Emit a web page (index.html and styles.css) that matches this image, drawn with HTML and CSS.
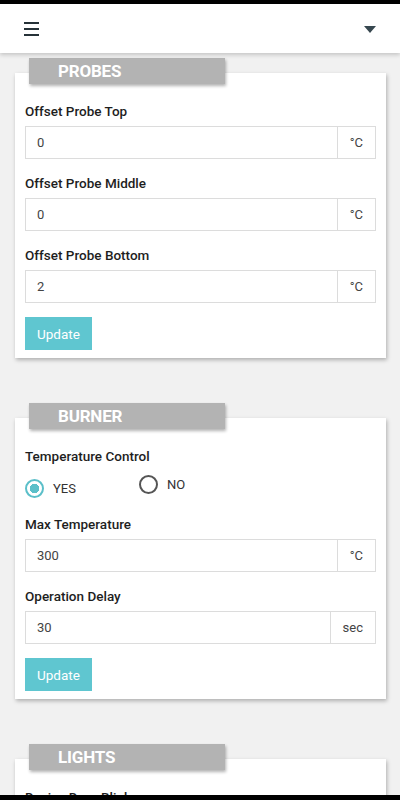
FILE: index.html
```html
<!DOCTYPE html>
<html lang="en">

<head>
    <meta charset="UTF-8">
    <meta name="viewport" content="width=device-width, initial-scale=1.0">
    <title>Settings</title>
    <link rel="stylesheet" href="styles.css">
</head>

<body>
    <div class="statusbar"></div>

    <header class="topbar">
        <span class="menu">
            <i></i><i></i><i></i>
        </span>
        <span class="caret"></span>
    </header>

    <main class="page">
        <section class="section">
            <div class="tab">PROBES</div>
            <div class="card">
                <div class="field">
                    <label>Offset Probe Top</label>
                    <div class="input">
                        <span class="value">0</span>
                        <span class="unit">°C</span>
                    </div>
                </div>
                <div class="field">
                    <label>Offset Probe Middle</label>
                    <div class="input">
                        <span class="value">0</span>
                        <span class="unit">°C</span>
                    </div>
                </div>
                <div class="field">
                    <label>Offset Probe Bottom</label>
                    <div class="input">
                        <span class="value">2</span>
                        <span class="unit">°C</span>
                    </div>
                </div>
                <button class="btn">Update</button>
            </div>
        </section>

        <section class="section">
            <div class="tab">BURNER</div>
            <div class="card">
                <div class="field">
                    <label>Temperature Control</label>
                    <div class="radios">
                        <span class="opt opt-yes"><i class="dot on"></i>YES</span>
                        <span class="opt"><i class="dot"></i>NO</span>
                    </div>
                </div>
                <div class="field">
                    <label>Max Temperature</label>
                    <div class="input">
                        <span class="value">300</span>
                        <span class="unit">°C</span>
                    </div>
                </div>
                <div class="field">
                    <label>Operation Delay</label>
                    <div class="input">
                        <span class="value">30</span>
                        <span class="unit">sec</span>
                    </div>
                </div>
                <button class="btn">Update</button>
            </div>
        </section>

        <section class="section">
            <div class="tab">LIGHTS</div>
            <div class="card">
                <div class="field">
                    <label>Device Door Blink</label>
                </div>
            </div>
        </section>
    </main>

    <div class="navbar"></div>
</body>

</html>
```

FILE: styles.css
```css
body {
    margin: 0;
    background-color: #f1f1f1;
    font-family: Roboto, "Liberation Sans", sans-serif;
    color: #222;
}

.statusbar {
    height: 4px;
    background-color: #000;
}

.navbar {
    position: fixed;
    left: 0;
    right: 0;
    bottom: 0;
    height: 5px;
    background-color: #000;
}

.topbar {
    position: relative;
    z-index: 2;
    display: flex;
    align-items: center;
    justify-content: space-between;
    height: 49px;
    padding: 0 24px;
    background-color: #fff;
    box-shadow: 0 2px 4px rgba(0, 0, 0, 0.18);
}

.menu {
    display: flex;
    flex-direction: column;
    gap: 4px;
    width: 15px;
}

.menu i {
    display: block;
    height: 2px;
    background-color: #263238;
}

.caret {
    width: 0;
    height: 0;
    margin-top: 2px;
    border-left: 6px solid transparent;
    border-right: 6px solid transparent;
    border-top: 7px solid #37474f;
}

.page {
    padding: 5px 14px 0 15px;
}

.section {
    margin-bottom: 45px;
}

.tab {
    position: relative;
    z-index: 1;
    width: 167px;
    height: 26px;
    margin: 0 0 -11px 14px;
    padding-left: 29px;
    line-height: 27px;
    font-size: 17px;
    font-weight: 700;
    letter-spacing: -0.2px;
    color: #fff;
    background-color: #b3b3b3;
    box-shadow: 1px 2px 3px rgba(0, 0, 0, 0.3);
}

.card {
    padding: 30px 10px 8px;
    background-color: #fff;
    box-shadow: 1px 2px 4px rgba(0, 0, 0, 0.28);
}

.field + .field {
    margin-top: 16px;
}

.field label {
    display: block;
    height: 16px;
    margin-bottom: 7px;
    line-height: 16px;
    font-size: 13.5px;
    font-weight: 500;
    color: #1e1e1e;
}

.input {
    display: flex;
    height: 31px;
    border: 1px solid #dcdcdc;
    font-size: 13px;
    color: #444;
}

.input .value {
    flex: 1;
    padding-left: 11px;
    line-height: 31px;
}

.input .unit {
    padding: 0 12px;
    border-left: 1px solid #dcdcdc;
    line-height: 31px;
    text-align: center;
}

.radios {
    display: flex;
    align-items: flex-start;
    height: 26px;
    margin-top: 10px;
    font-size: 13px;
    color: #333;
}

.opt {
    display: flex;
    align-items: center;
    gap: 9px;
    height: 20px;
}

.opt-yes {
    width: 114px;
    padding-top: 4px;
}

.dot {
    box-sizing: border-box;
    width: 19px;
    height: 19px;
    border: 2px solid #555;
    border-radius: 50%;
}

.dot.on {
    border-color: #5bbfc9;
    background: radial-gradient(circle, #5bbfc9 0 4.5px, #fff 5px);
}

.btn {
    display: block;
    height: 33px;
    margin-top: 14px;
    padding: 0 12px;
    border: none;
    font-family: Roboto, "Liberation Sans", sans-serif;
    font-size: 13.5px;
    color: #fff;
    background-color: #5fc6d0;
}
```
